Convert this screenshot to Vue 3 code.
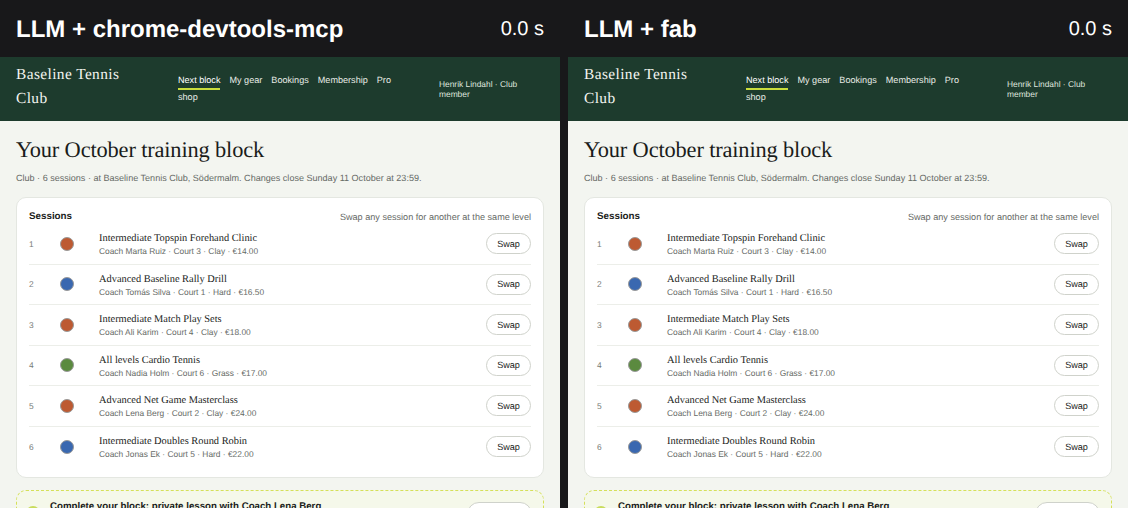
<template>
  <div class="stage">
    <section v-for="p in panels" :key="p" class="panel">
      <div class="topbar">
        <span class="tool">LLM + {{ p }}</span>
        <span class="time">0.0 s</span>
      </div>
      <header class="nav">
        <div class="brand">Baseline Tennis Club</div>
        <nav class="links">
          <a class="active">Next block</a><a>My gear</a><a>Bookings</a><a>Membership</a><a>Pro</a><a>shop</a>
        </nav>
        <div class="user">Henrik Lindahl · Club member</div>
      </header>
      <main class="content">
        <h1>Your October training block</h1>
        <p class="sub">Club · 6 sessions · at Baseline Tennis Club, Södermalm. Changes close Sunday 11 October at 23:59.</p>
        <div class="card">
          <div class="card-head">
            <strong>Sessions</strong>
            <span>Swap any session for another at the same level</span>
          </div>
          <div v-for="(s, i) in sessions" :key="s.t" class="row">
            <span class="num">{{ i + 1 }}</span>
            <span class="dot" :class="s.c"></span>
            <div class="info">
              <div class="name">{{ s.t }}</div>
              <div class="meta">{{ s.m }}</div>
            </div>
            <button class="swap">Swap</button>
          </div>
        </div>
        <div class="promo">
          <span class="pdot"></span>
          <strong>Complete your block: private lesson with Coach Lena Berg</strong>
          <button class="add"></button>
        </div>
      </main>
    </section>
  </div>
</template>

<script setup>
const panels = ['chrome-devtools-mcp', 'fab']
const sessions = [
  { t: 'Intermediate Topspin Forehand Clinic', m: 'Coach Marta Ruiz · Court 3 · Clay · €14.00', c: 'clay' },
  { t: 'Advanced Baseline Rally Drill', m: 'Coach Tomás Silva · Court 1 · Hard · €16.50', c: 'hard' },
  { t: 'Intermediate Match Play Sets', m: 'Coach Ali Karim · Court 4 · Clay · €18.00', c: 'clay' },
  { t: 'All levels Cardio Tennis', m: 'Coach Nadia Holm · Court 6 · Grass · €17.00', c: 'grass' },
  { t: 'Advanced Net Game Masterclass', m: 'Coach Lena Berg · Court 2 · Clay · €24.00', c: 'clay' },
  { t: 'Intermediate Doubles Round Robin', m: 'Coach Jonas Ek · Court 5 · Hard · €22.00', c: 'hard' }
]
</script>

<style>
html, body { margin: 0; height: 508px; overflow: hidden; background: #18181a; }
</style>

<style scoped>
.stage { display: grid; grid-template-columns: 560px 560px; column-gap: 8px; height: 508px; overflow: hidden; background: #18181a; font-family: "Liberation Sans", Arial, sans-serif; text-rendering: geometricPrecision; }
.panel { background: #f3f5f0; height: 508px; overflow: hidden; }
.topbar { height: 57px; background: #18181a; color: #fff; display: flex; align-items: center; justify-content: space-between; padding: 2px 16px 0; box-sizing: border-box; }
.tool { font-size: 24px; font-weight: 700; }
.time { font-size: 20px; }
.nav { height: 64px; box-sizing: border-box; background: #1d3b2d; padding: 5px 16px 0; display: flex; color: #f3f5f0; }
.brand { width: 162px; padding: 1px 30px 0 0; box-sizing: border-box; font-family: "Liberation Serif", serif; font-size: 15.4px; line-height: 24px; letter-spacing: 0.4px; }
.links { width: 261px; display: block; font-size: 9.1px; line-height: 15px; padding: 11px 20px 0 0; box-sizing: border-box; color: #e8ece6; }
.links a { display: inline-block; margin-right: 9px; line-height: 15px; }
.links a.active { color: #fff; height: 13px; line-height: 13px; padding-bottom: 1px; border-bottom: 2px solid #c9dc3c; vertical-align: top; margin-top: 1px; }
.links a:last-child { display: block; }
.user { width: 90px; font-size: 8.4px; line-height: 10.4px; padding-top: 17px; color: #dfe5de; }
.content { padding: 0 16px; }
h1 { margin: 0; padding-top: 15px; font-family: "Liberation Serif", serif; font-weight: 400; font-size: 22.4px; line-height: 28px; letter-spacing: -0.15px; color: #1a1c1a; }
.sub { margin: 7px 0 0; font-size: 9.05px; line-height: 14px; color: #666a66; }
.card { margin-top: 12px; background: #fff; border: 1px solid #e4e7e1; border-radius: 10px; padding: 11px 12px 11px; height: 281px; box-sizing: border-box; }
.card-head { display: flex; justify-content: space-between; align-items: center; height: 15px; font-size: 9.1px; color: #666a66; }
.card-head strong { color: #1a1c1a; font-size: 9.8px; }
.row { display: flex; align-items: center; height: 40.5px; box-sizing: border-box; border-bottom: 1px solid #eceee9; }
.row:last-child { border-bottom: 0; }
.num { width: 31px; font-size: 8.4px; color: #777b77; }
.dot { width: 14px; height: 14px; box-sizing: border-box; border-radius: 50%; margin-right: 25px; border: 1px solid #999; }
.clay { background: #bd5a32; }
.hard { background: #3a68b0; }
.grass { background: #5b8a3f; }
.info { flex: 1; padding-top: 3px; }
.name { font-family: "Liberation Serif", serif; font-size: 10.4px; line-height: 13px; color: #1a1c1a; }
.meta { font-size: 8.4px; line-height: 13px; color: #666a66; }
.swap { width: 45px; height: 21px; padding: 0; background: #fff; border: 1px solid #cfd2cb; border-radius: 11px; font: 9.1px "Liberation Sans", Arial, sans-serif; text-rendering: geometricPrecision; color: #1a1c1a; }
.promo { position: relative; margin-top: 12px; height: 60px; box-sizing: border-box; background: #f5f8ea; border: 1px dashed #d5e05a; border-radius: 10px; padding: 10px 12px 0 33px; font-size: 9.7px; color: #1a1c1a; }
.pdot { position: absolute; left: 9px; top: 15px; width: 14px; height: 14px; border-radius: 50%; background: #c9dc5c; }
.add { position: absolute; right: 11px; top: 11px; width: 65px; height: 24px; background: #fff; border: 1px solid #cfd2cb; border-radius: 12px; }
</style>
